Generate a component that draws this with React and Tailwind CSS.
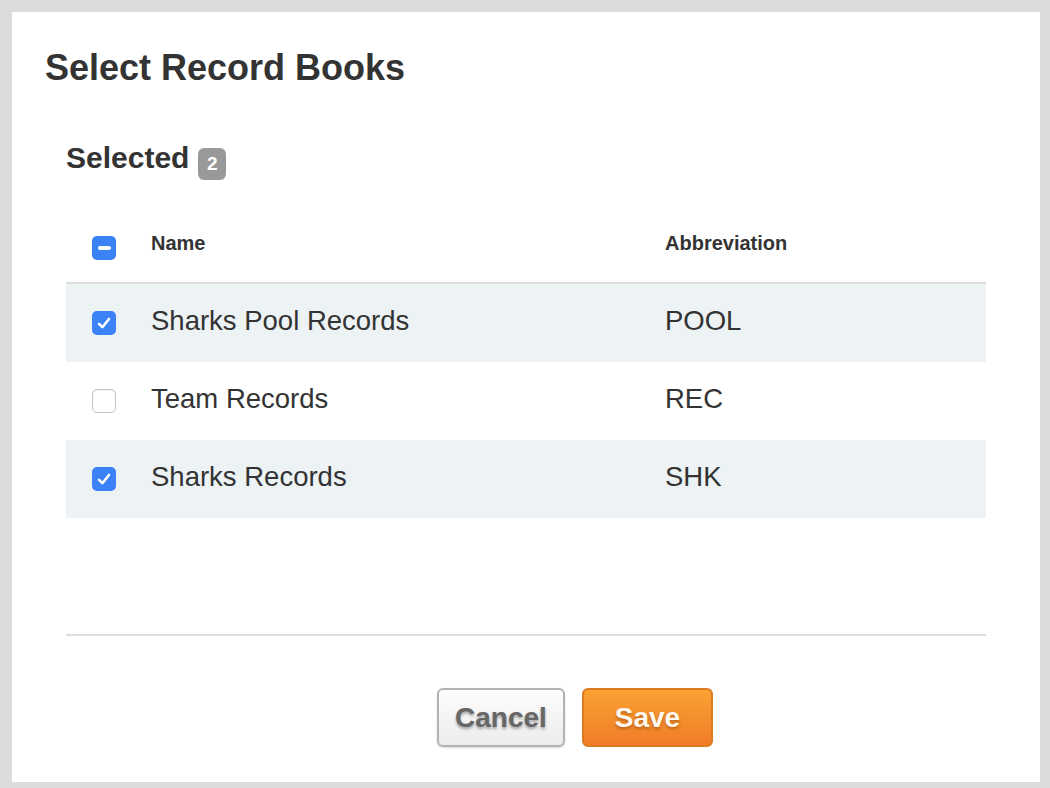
import React, { useState } from 'react';

const books = [
  { id: 1, name: 'Sharks Pool Records', abbr: 'POOL', checked: true },
  { id: 2, name: 'Team Records', abbr: 'REC', checked: false },
  { id: 3, name: 'Sharks Records', abbr: 'SHK', checked: true },
];

const Box = ({ state }) => {
  if (state === 'off') {
    return <div className="w-[24px] h-[24px] rounded-[5px] border border-[#c4c4c4] bg-white shadow-[inset_0_1px_1px_rgba(0,0,0,0.06)]" />;
  }
  return (
    <div className="w-[24px] h-[24px] rounded-[5px] bg-[#3b82f6] flex items-center justify-center">
      {state === 'mixed' ? (
        <div className="w-[13px] h-[4px] rounded-full bg-white" />
      ) : (
        <svg width="18" height="18" viewBox="0 0 18 18" fill="none">
          <path d="M4 9.8 L7.4 13.2 L14 5" stroke="white" strokeWidth="2.6" strokeLinecap="round" strokeLinejoin="round" />
        </svg>
      )}
    </div>
  );
};

const App = () => {
  const [rows] = useState(books);
  const count = rows.filter(r => r.checked).length;

  return (
    <div className="w-[1050px] h-[788px] bg-[#dcdcdc] pt-[12px] pl-[12px] pr-[10px] pb-[6px] text-[#333]" style={{ fontFamily: '"Liberation Sans", Arial, Helvetica, sans-serif' }}>
      <div className="bg-white h-full">
        <h1 className="pt-[36px] pl-[33px] text-[36px] leading-[40px] font-bold">Select Record Books</h1>

        <div className="px-[54px]">
          {/* Selected count */}
          <div className="flex items-start gap-[9px] mt-[52px]">
            <h2 className="text-[30px] leading-[36px] font-bold">Selected</h2>
            <span className="mt-[8px] w-[28px] h-[32px] rounded-[6px] bg-[#999] text-white text-[19px] font-bold flex items-center justify-center">{count}</span>
          </div>

          {/* Table */}
          <div className="mt-[34px]">
            <div className="flex items-start h-[70px] pt-[17px] border-b-2 border-[#dedede] text-[20px] leading-[24px] font-bold">
              <div className="w-[85px] pl-[26px] pt-[5px]"><Box state="mixed" /></div>
              <div className="w-[514px]">Name</div>
              <div className="flex-1">Abbreviation</div>
            </div>
            {rows.map((r, i) => (
              <div key={r.id} className={`flex items-center h-[78px] text-[27.5px] leading-[32px] ${i % 2 === 0 ? 'bg-[#edf2f5]' : 'bg-white'}`}>
                <div className="w-[85px] pl-[26px]"><Box state={r.checked ? 'on' : 'off'} /></div>
                <div className="w-[514px] -mt-[4px]">{r.name}</div>
                <div className="flex-1 -mt-[4px]">{r.abbr}</div>
              </div>
            ))}
          </div>

          <div className="mt-[116px] h-[2px] bg-[#dedede]" />

          {/* Buttons */}
          <div className="flex gap-[17px] mt-[52px] pl-[371px]">
            <button className="w-[128px] h-[59px] rounded-[6px] border-2 border-[#b3b3b3] bg-gradient-to-b from-[#fdfdfd] to-[#ececec] text-[#666] text-[28px] font-bold shadow-[0_1px_2px_rgba(0,0,0,0.15)] [text-shadow:0_2px_3px_rgba(0,0,0,0.35)]">
              Cancel
            </button>
            <button className="w-[131px] h-[59px] rounded-[6px] border-2 border-[#de7a22] bg-gradient-to-b from-[#f9a233] to-[#f07c28] text-[#fff8ee] text-[28px] font-bold [text-shadow:0_2px_3px_rgba(120,50,0,0.45)]">
              Save
            </button>
          </div>
        </div>
      </div>
    </div>
  );
};

export default App;
